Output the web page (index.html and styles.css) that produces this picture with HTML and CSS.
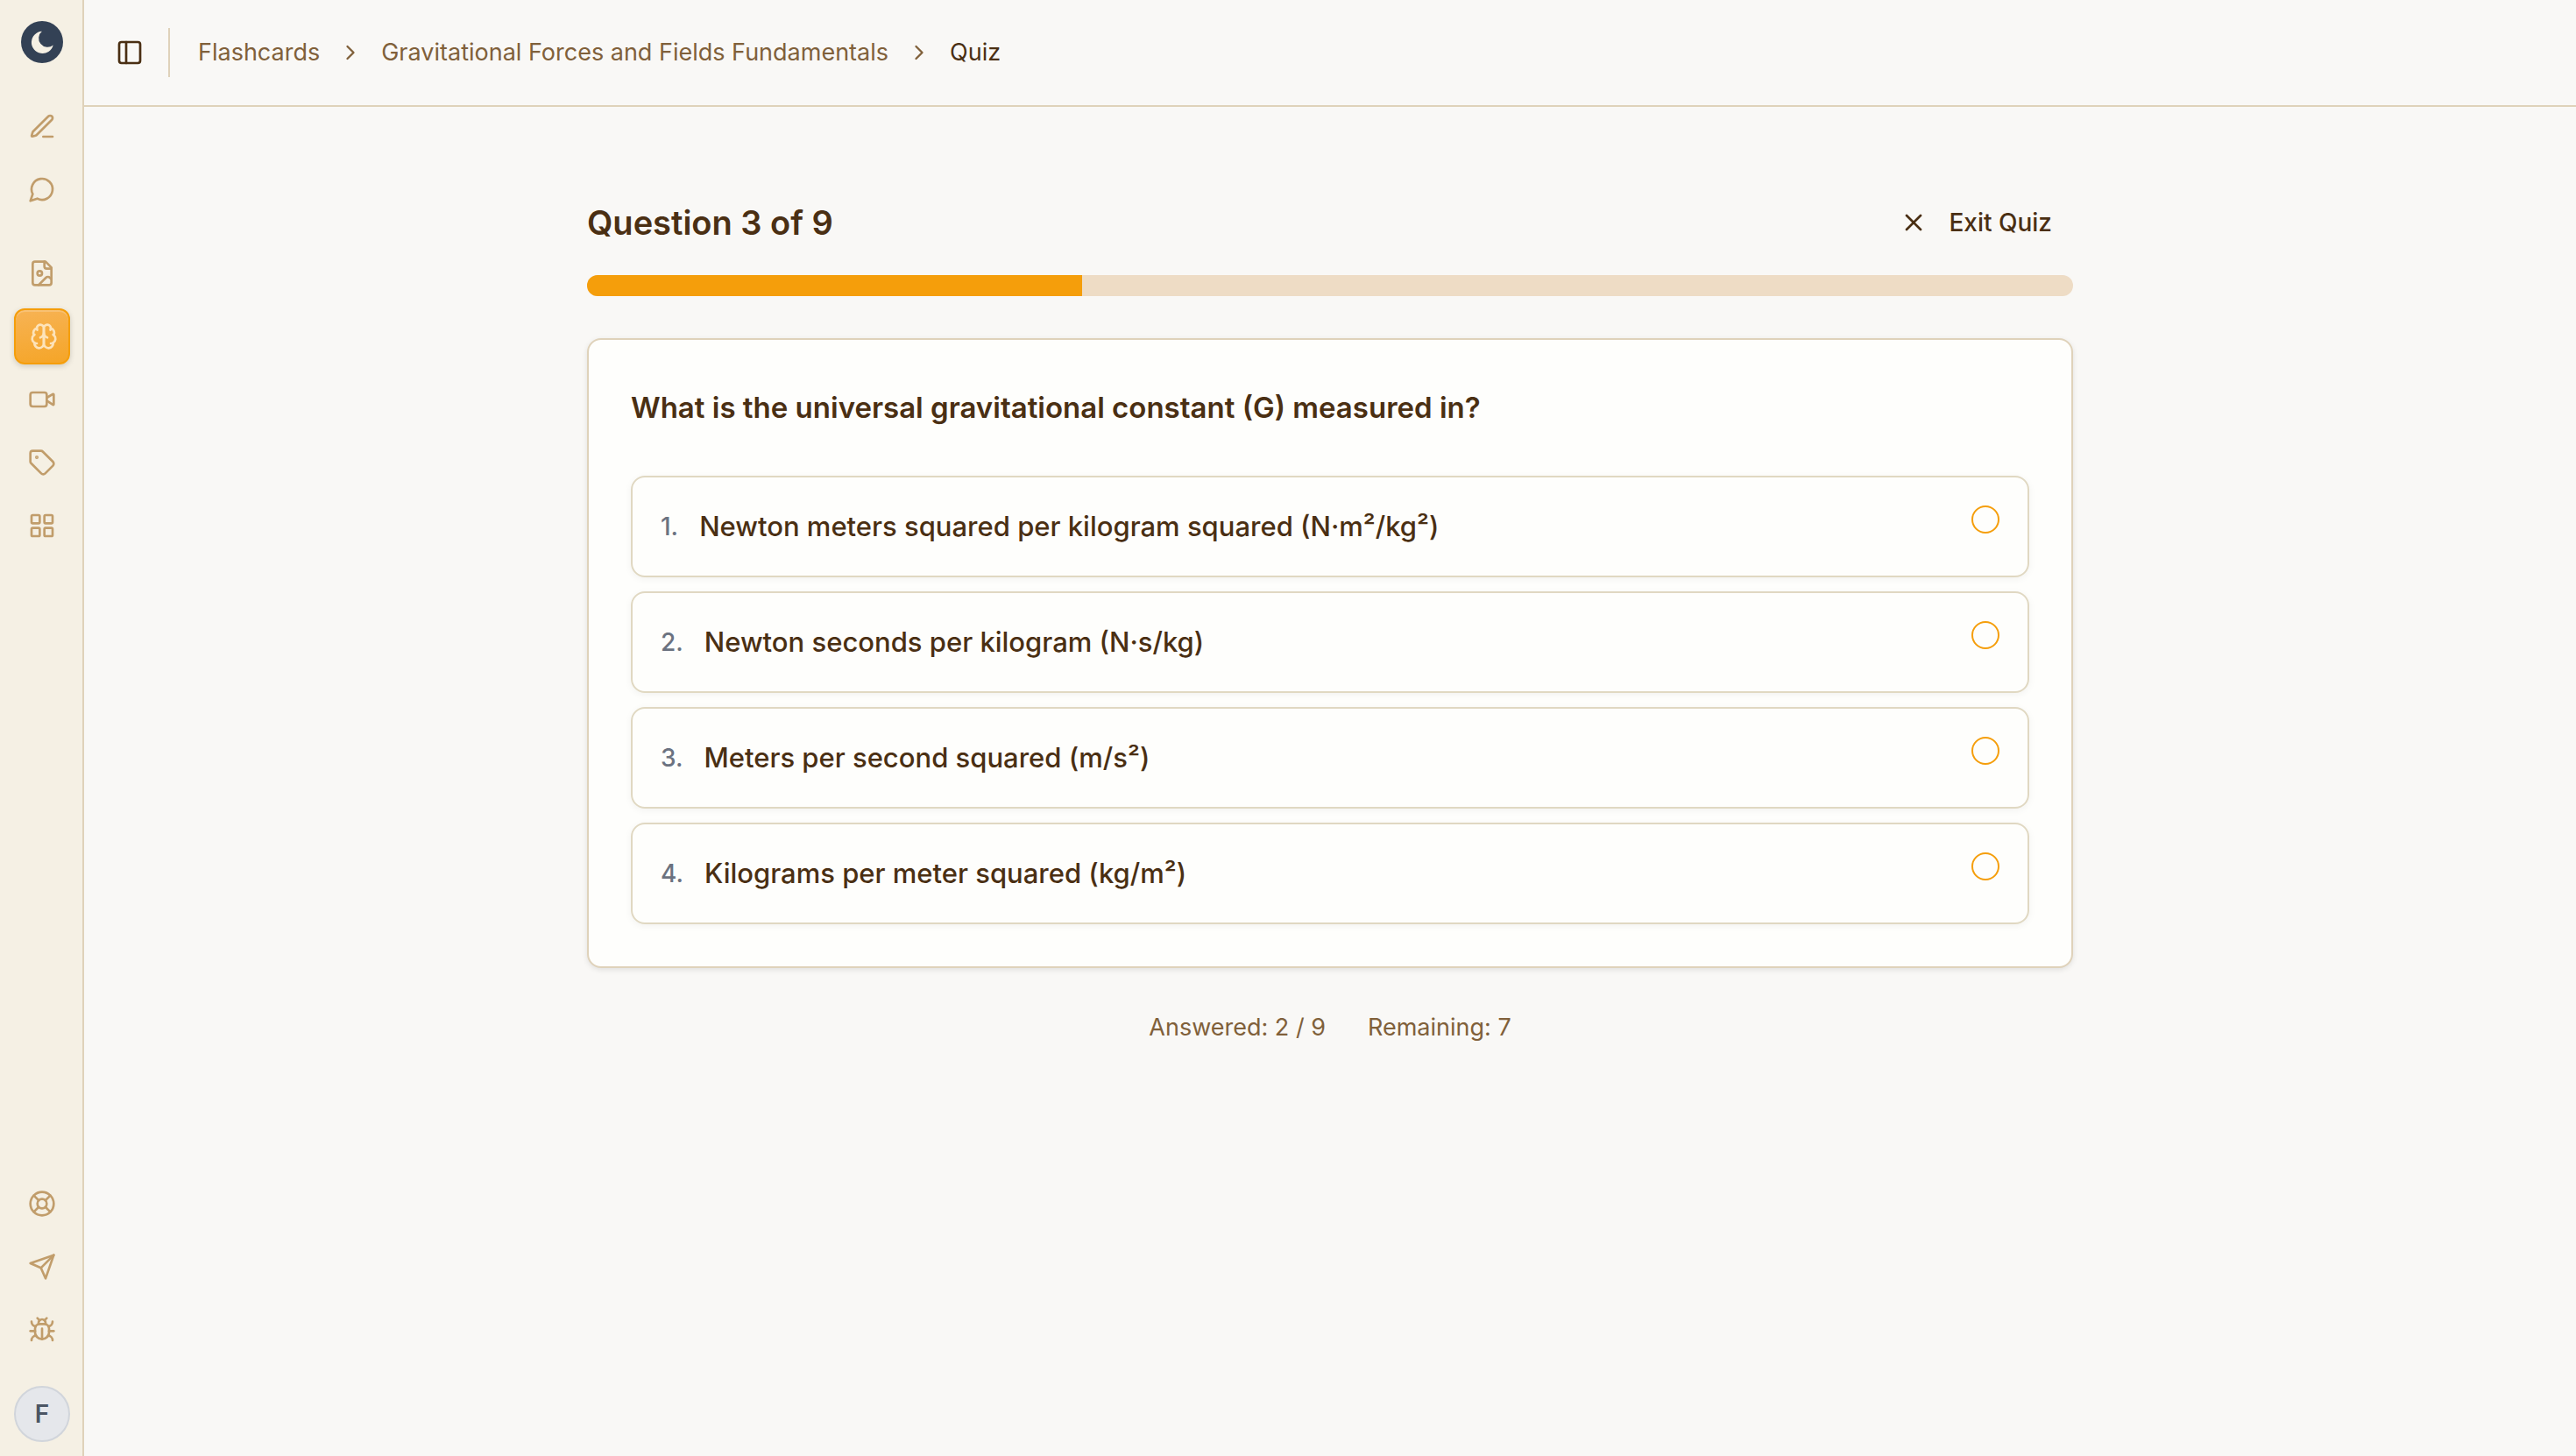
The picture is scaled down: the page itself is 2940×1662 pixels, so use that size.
FILE: index.html
```html
<!DOCTYPE html>
<html lang="en">
<head>
  <meta charset="UTF-8">
  <meta name="viewport" content="width=device-width, initial-scale=1.0">
  <title>Quiz</title>
  <link rel="stylesheet" href="styles.css">
</head>
<body>
  <div class="app">
    <aside class="sidebar">
      <a class="logo" href="#" aria-label="Home">
        <svg viewBox="0 0 48 48">
          <circle cx="24" cy="24" r="24" fill="#334155"/>
          <path d="M23.9 11.8A12.6 12.6 0 1 0 36.7 27.6A10 10 0 0 1 23.9 11.8Z" fill="#f5f0e4"/>
        </svg>
      </a>
      <nav class="nav-group">
        <a class="nav-item" href="#" aria-label="Write">
          <svg class="icon" viewBox="0 0 24 24"><path d="M13 21h8"/><path d="M17.4 3.6a1 1 0 0 1 3 3L7.4 19.5a2 2 0 0 1-.9.5l-2.8.8a.5.5 0 0 1-.6-.6l.8-2.9a2 2 0 0 1 .5-.8z"/></svg>
        </a>
        <a class="nav-item" href="#" aria-label="Chat">
          <svg class="icon" viewBox="0 0 24 24"><path d="M7.9 20A9 9 0 1 0 4 16.1L2 22Z"/></svg>
        </a>
      </nav>
      <nav class="nav-group">
        <a class="nav-item" href="#" aria-label="Files">
          <svg class="icon" viewBox="0 0 24 24"><path d="M15 2H6a2 2 0 0 0-2 2v16a2 2 0 0 0 2 2h12a2 2 0 0 0 2-2V7Z"/><path d="M14 2v4a2 2 0 0 0 2 2h4"/><circle cx="10" cy="12" r="2"/><path d="m20 17-1.296-1.296a2.41 2.41 0 0 0-3.408 0L9 22"/></svg>
        </a>
        <a class="nav-item active" href="#" aria-label="Flashcards">
          <svg class="icon" viewBox="0 0 24 24"><path d="M12 5a3 3 0 1 0-5.997.125 4 4 0 0 0-2.526 5.77 4 4 0 0 0 .556 6.588A4 4 0 1 0 12 18Z"/><path d="M12 5a3 3 0 1 1 5.997.125 4 4 0 0 1 2.526 5.77 4 4 0 0 1-.556 6.588A4 4 0 1 1 12 18Z"/><path d="M15 13a4.5 4.5 0 0 1-3-4 4.5 4.5 0 0 1-3 4"/><path d="M17.599 6.5a3 3 0 0 0 .399-1.375"/><path d="M6.003 5.125A3 3 0 0 0 6.401 6.5"/><path d="M3.477 10.896a4 4 0 0 1 .585-.396"/><path d="M19.938 10.5a4 4 0 0 1 .585.396"/><path d="M6 18a4 4 0 0 1-1.967-.516"/><path d="M19.967 17.484A4 4 0 0 1 18 18"/></svg>
        </a>
        <a class="nav-item" href="#" aria-label="Videos">
          <svg class="icon" viewBox="0 0 24 24"><path d="m16 13 5.223 3.482a.5.5 0 0 0 .777-.416V7.87a.5.5 0 0 0-.752-.432L16 10.5"/><rect x="2" y="6" width="14" height="12" rx="2"/></svg>
        </a>
        <a class="nav-item" href="#" aria-label="Pricing">
          <svg class="icon" viewBox="0 0 24 24"><path d="M12.586 2.586A2 2 0 0 0 11.172 2H4a2 2 0 0 0-2 2v7.172a2 2 0 0 0 .586 1.414l8.704 8.704a2.426 2.426 0 0 0 3.42 0l6.58-6.58a2.426 2.426 0 0 0 0-3.42z"/><circle cx="7.5" cy="7.5" r=".5" fill="currentColor"/></svg>
        </a>
        <a class="nav-item" href="#" aria-label="Dashboard">
          <svg class="icon" viewBox="0 0 24 24"><rect x="3" y="3" width="7" height="7" rx="1"/><rect x="14" y="3" width="7" height="7" rx="1"/><rect x="14" y="14" width="7" height="7" rx="1"/><rect x="3" y="14" width="7" height="7" rx="1"/></svg>
        </a>
      </nav>
      <nav class="nav-group nav-bottom">
        <a class="nav-item" href="#" aria-label="Support">
          <svg class="icon" viewBox="0 0 24 24"><circle cx="12" cy="12" r="10"/><path d="m4.93 4.93 4.24 4.24"/><path d="m14.83 9.17 4.24-4.24"/><path d="m14.83 14.83 4.24 4.24"/><path d="m9.17 14.83-4.24 4.24"/><circle cx="12" cy="12" r="4"/></svg>
        </a>
        <a class="nav-item" href="#" aria-label="Feedback">
          <svg class="icon" viewBox="0 0 24 24"><path d="m22 2-7 20-4-9-9-4Z"/><path d="M22 2 11 13"/></svg>
        </a>
        <a class="nav-item" href="#" aria-label="Report a bug">
          <svg class="icon" viewBox="0 0 24 24"><path d="m8 2 1.88 1.88"/><path d="M14.12 3.88 16 2"/><path d="M9 7.13v-1a3.003 3.003 0 1 1 6 0v1"/><path d="M12 20c-3.3 0-6-2.7-6-6v-3a4 4 0 0 1 4-4h4a4 4 0 0 1 4 4v3c0 3.3-2.7 6-6 6"/><path d="M12 20v-9"/><path d="M6.53 9C4.6 8.8 3 7.1 3 5"/><path d="M6 13H2"/><path d="M3 21c0-2.1 1.7-3.9 3.8-4"/><path d="M20.97 5c0 2.1-1.6 3.8-3.5 4"/><path d="M22 13h-4"/><path d="M17.2 17c2.1.1 3.8 1.9 3.8 4"/></svg>
        </a>
      </nav>
      <div class="sidebar-footer">
        <button class="avatar" type="button">F</button>
      </div>
    </aside>

    <div class="main-content">
      <header class="topbar">
        <button class="toggle" type="button" aria-label="Toggle sidebar">
          <svg class="icon" viewBox="0 0 24 24"><rect x="3" y="3" width="18" height="18" rx="2"/><path d="M9 3v18"/></svg>
        </button>
        <div class="separator"></div>
        <nav class="breadcrumb">
          <a href="#">Flashcards</a>
          <svg class="icon chevron" viewBox="0 0 24 24"><path d="m9 18 6-6-6-6"/></svg>
          <a href="#">Gravitational Forces and Fields Fundamentals</a>
          <svg class="icon chevron" viewBox="0 0 24 24"><path d="m9 18 6-6-6-6"/></svg>
          <span class="current">Quiz</span>
        </nav>
      </header>

      <main class="quiz">
        <div class="quiz-header">
          <h1>Question 3 of 9</h1>
          <button class="exit-button" type="button">
            <svg class="icon" viewBox="0 0 24 24"><path d="M18 6 6 18"/><path d="m6 6 12 12"/></svg>
            Exit Quiz
          </button>
        </div>
        <div class="progress" role="progressbar" aria-label="Quiz progress" aria-valuenow="3" aria-valuemin="0" aria-valuemax="9">
          <div class="progress-fill" style="width: 33.3%"></div>
        </div>

        <section class="card">
          <h2>What is the universal gravitational constant (G) measured in?</h2>
          <div class="options">
            <label class="option" for="option-1">
              <span class="number">1.</span>
              <span class="answer">Newton meters squared per kilogram squared (N·m²/kg²)</span>
              <input type="radio" name="answer" id="option-1">
            </label>
            <label class="option" for="option-2">
              <span class="number">2.</span>
              <span class="answer">Newton seconds per kilogram (N·s/kg)</span>
              <input type="radio" name="answer" id="option-2">
            </label>
            <label class="option" for="option-3">
              <span class="number">3.</span>
              <span class="answer">Meters per second squared (m/s²)</span>
              <input type="radio" name="answer" id="option-3">
            </label>
            <label class="option" for="option-4">
              <span class="number">4.</span>
              <span class="answer">Kilograms per meter squared (kg/m²)</span>
              <input type="radio" name="answer" id="option-4">
            </label>
          </div>
        </section>

        <div class="stats">
          <span>Answered: 2 / 9</span>
          <span>Remaining: 7</span>
        </div>
      </main>
    </div>
  </div>
</body>
</html>
```
FILE: styles.css
```css
* {
  margin: 0;
  padding: 0;
  box-sizing: border-box;
}

:root {
  --background: #f9f8f6;
  --sidebar-bg: #f5f0e4;
  --card-bg: #fefefc;
  --border: #dfd2ba;
  --option-border: #e0d8c2;
  --text: #4a2f13;
  --text-muted: #80603a;
  --icon: #c19d6b;
  --primary: #f59e0b;
  --track: #eedcc5;
}

body {
  background-color: var(--background);
  color: var(--text);
  font-family: Inter, sans-serif;
  font-size: 27px;
  line-height: 40px;
}

a {
  color: inherit;
  text-decoration: none;
}

button {
  border: none;
  background: none;
  color: inherit;
  font: inherit;
  cursor: pointer;
}

.app {
  display: flex;
  min-height: 100vh;
}

.icon {
  width: 32px;
  height: 32px;
  flex-shrink: 0;
  fill: none;
  stroke: currentColor;
  stroke-width: 2;
  stroke-linecap: round;
  stroke-linejoin: round;
}

/* Sidebar */
.sidebar {
  display: flex;
  flex-direction: column;
  width: 96px;
  flex-shrink: 0;
  background-color: var(--sidebar-bg);
  border-right: 2px solid var(--border);
}

.logo {
  display: flex;
  height: 96px;
  padding: 24px;
}

.logo svg {
  width: 48px;
  height: 48px;
  flex-shrink: 0;
}

.nav-group {
  display: flex;
  flex-direction: column;
  gap: 8px;
  padding: 16px;
}

.nav-bottom {
  margin-top: auto;
}

.nav-item {
  display: flex;
  align-items: center;
  width: 64px;
  height: 64px;
  padding: 16px;
  border-radius: 12px;
  color: var(--icon);
}

.nav-item.active {
  border: 2px solid var(--primary);
  background: linear-gradient(170deg, #f7b355, #f5a527);
  box-shadow: 0 2px 6px rgba(0, 0, 0, 0.16), inset 0 2px 0 rgba(255, 255, 255, 0.2);
  color: #fde3ba;
}

.sidebar-footer {
  padding: 16px;
}

.avatar {
  display: block;
  width: 64px;
  height: 64px;
  border: 2px solid #d1d5db;
  border-radius: 50%;
  background-color: #e5e7eb;
  color: #4b5563;
  font-size: 28px;
  font-weight: 600;
}

/* Top bar */
.main-content {
  flex: 1;
  min-width: 0;
}

.topbar {
  display: flex;
  align-items: center;
  height: 122px;
  padding: 0 24px;
  border-bottom: 2px solid var(--border);
}

.toggle {
  display: flex;
  align-items: center;
  justify-content: center;
  width: 56px;
  height: 56px;
}

.separator {
  width: 2px;
  height: 56px;
  margin: 0 32px 0 16px;
  background-color: var(--border);
}

.breadcrumb {
  display: flex;
  align-items: center;
  gap: 21px;
  color: var(--text-muted);
}

.chevron {
  width: 28px;
  height: 28px;
}

.current {
  color: var(--text);
}

/* Quiz */
.quiz {
  max-width: 1792px;
  margin: 0 auto;
  padding: 96px 48px;
}

.quiz-header {
  display: flex;
  align-items: center;
  justify-content: space-between;
  margin-bottom: 24px;
}

h1 {
  font-size: 38px;
  font-weight: 600;
  line-height: 56px;
}

.exit-button {
  display: flex;
  align-items: center;
  gap: 24px;
  height: 72px;
  padding: 0 24px;
  font-size: 28px;
  font-weight: 500;
}

.progress {
  height: 24px;
  margin-bottom: 48px;
  border-radius: 12px;
  background-color: var(--track);
  overflow: hidden;
}

.progress-fill {
  height: 100%;
  background-color: var(--primary);
}

.card {
  padding: 48px;
  border: 2px solid var(--border);
  border-radius: 16px;
  background-color: var(--card-bg);
  box-shadow: 0 2px 6px rgba(0, 0, 0, 0.1);
}

h2 {
  margin-bottom: 48px;
  font-size: 33px;
  font-weight: 600;
  line-height: 59px;
}

.options {
  display: flex;
  flex-direction: column;
  gap: 16px;
}

.option {
  display: flex;
  align-items: flex-start;
  padding: 32px;
  border: 2px solid var(--option-border);
  border-radius: 16px;
  box-shadow: 0 2px 8px rgba(0, 0, 0, 0.05);
  line-height: 48px;
  cursor: pointer;
}

.number {
  margin-right: 24px;
  color: #6b7280;
  font-size: 28px;
  font-weight: 500;
}

.answer {
  flex: 1;
  font-size: 31px;
  font-weight: 500;
}

.option input {
  appearance: none;
  width: 32px;
  height: 32px;
  border: 2px solid var(--primary);
  border-radius: 50%;
  cursor: pointer;
}

.option input:checked {
  background-color: var(--primary);
  box-shadow: inset 0 0 0 6px var(--card-bg);
}

.stats {
  display: flex;
  justify-content: center;
  gap: 48px;
  margin-top: 48px;
  color: var(--text-muted);
}
```
